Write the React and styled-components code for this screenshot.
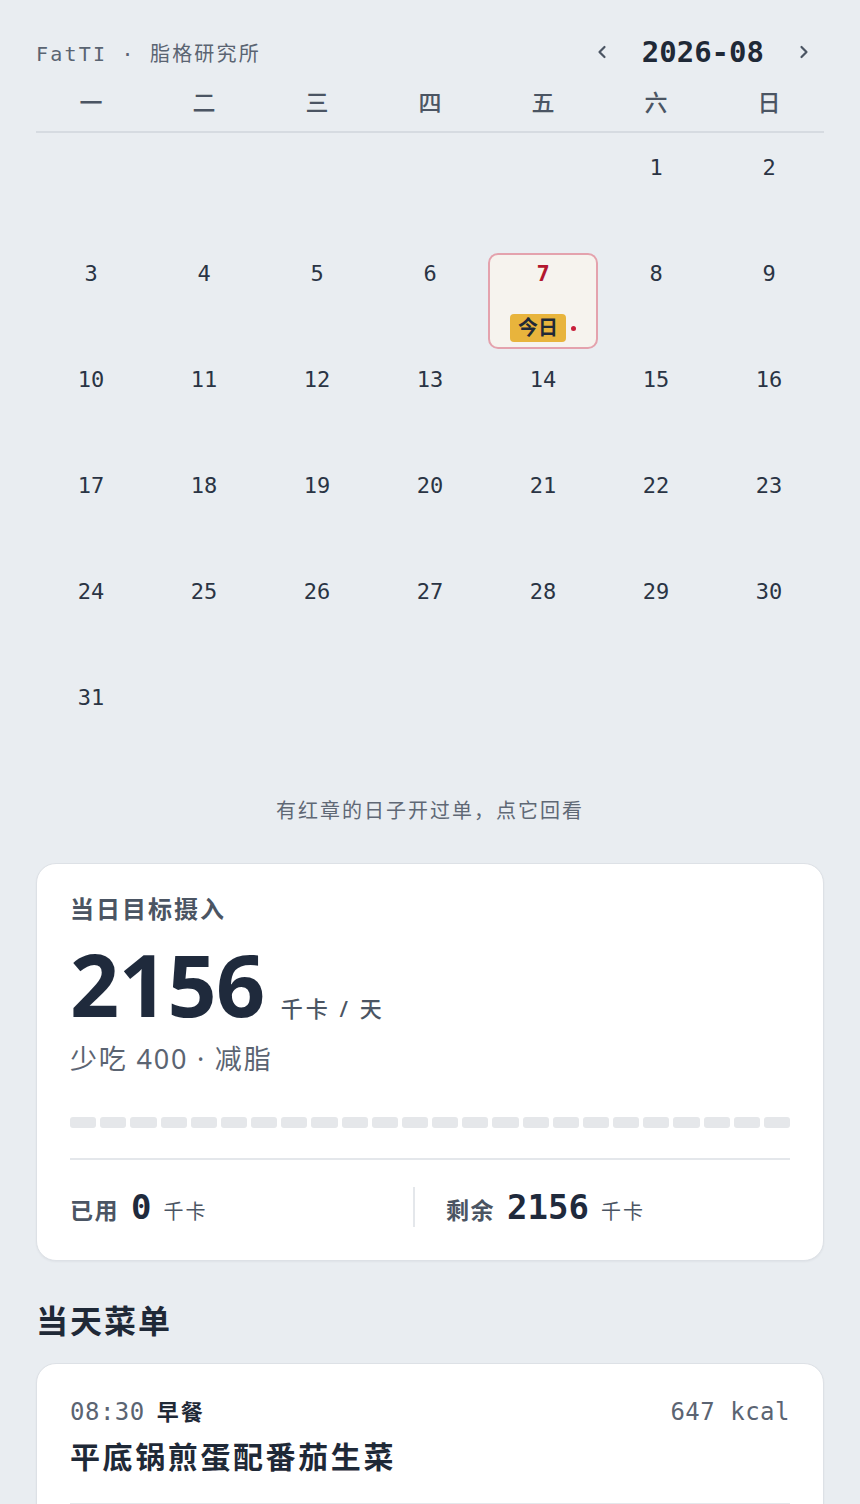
import React from 'react';
import styled, { createGlobalStyle } from 'styled-components';

const GlobalStyle = createGlobalStyle`
	html, body {
		margin: 0;
		padding: 0;
		background: #e9edf1;
	}
	body {
		font-family: 'Noto Sans', 'Noto Sans CJK SC', sans-serif;
		color: #1f2937;
	}
`;

const MONO = `'DejaVu Sans Mono', 'Noto Sans CJK SC', monospace`;
const SANS = `'Noto Sans', 'Noto Sans CJK SC', sans-serif`;

const Page = styled.div`
	padding: 36px 36px 0;
	min-height: 1504px;
	box-sizing: border-box;
`;

const Header = styled.header`
	display: flex;
	align-items: center;
	justify-content: space-between;
	height: 32px;
`;

const Brand = styled.div`
	font-family: ${MONO};
	font-size: 20px;
	letter-spacing: 2.2px;
	color: #5a6472;
`;

const MonthNav = styled.div`
	display: flex;
	align-items: center;
	gap: 33px;
	padding-right: 13px;
`;

const NavBtn = styled.button`
	border: none;
	background: none;
	padding: 0;
	display: flex;
	align-items: center;
	color: #4b5563;
	cursor: pointer;
`;

const MonthLabel = styled.div`
	font-family: ${MONO};
	font-weight: 700;
	font-size: 29px;
	color: #1f2937;
`;

const WeekRow = styled.div`
	display: grid;
	grid-template-columns: repeat(7, 1fr);
	column-gap: 3px;
	margin-top: 8px;
	padding: 14px 0 15px;
	border-bottom: 2px solid #d6dbe1;
`;

const WeekDay = styled.div`
	text-align: center;
	font-family: ${MONO};
	font-size: 23px;
	font-weight: 500;
	line-height: 26px;
	color: #4b5563;
`;

const Grid = styled.div`
	display: grid;
	grid-template-columns: repeat(7, 1fr);
	column-gap: 3px;
	row-gap: 10px;
	padding-top: 14px;
`;

const Cell = styled.div`
	height: 96px;
	box-sizing: border-box;
	border-radius: 10px;
	border: 2px solid ${(p) => (p.today ? '#e4a2ad' : 'transparent')};
	background: ${(p) => (p.today ? '#f6f3ee' : 'transparent')};
	display: flex;
	flex-direction: column;
	align-items: center;
	padding-top: 6px;
`;

const DayNum = styled.div`
	font-family: ${MONO};
	font-size: 22px;
	line-height: 26px;
	font-weight: ${(p) => (p.today ? 700 : 400)};
	color: ${(p) => (p.today ? '#b3172f' : '#2a3444')};
`;

const TodayRow = styled.div`
	display: flex;
	align-items: center;
	gap: 5px;
	margin-top: 27px;
`;

const TodayBadge = styled.span`
	background: #e8b43c;
	color: #1f2937;
	font-family: ${SANS};
	font-weight: 700;
	font-size: 20px;
	line-height: 28px;
	padding: 0 8px;
	border-radius: 4px;
`;

const Dot = styled.span`
	width: 5px;
	height: 5px;
	border-radius: 50%;
	background: #c81e3a;
`;

const Caption = styled.p`
	margin: 28px 0 0;
	text-align: center;
	font-size: 20px;
	letter-spacing: 2px;
	line-height: 20px;
	color: #5f6875;
`;

const Card = styled.section`
	background: #fff;
	border: 1px solid #dde1e6;
	border-radius: 20px;
	box-shadow: 0 1px 2px rgba(30, 40, 60, 0.05);
	margin-top: ${(p) => p.mt || 0}px;
	padding: ${(p) => p.pad || '30px 33px 0'};
`;

const CardLabel = styled.div`
	font-size: 24px;
	letter-spacing: 2px;
	line-height: 30px;
	font-weight: 700;
	color: #4b5563;
`;

const BigLine = styled.div`
	display: flex;
	align-items: baseline;
	gap: 16px;
	margin-top: 12px;
`;

const BigNum = styled.span`
	font-family: 'Noto Sans', sans-serif;
	font-weight: 700;
	font-size: 86px;
	line-height: 96px;
	color: #1f2a3c;
	letter-spacing: -0.5px;
`;

const BigUnit = styled.span`
	font-size: 22px;
	letter-spacing: 3px;
	color: #4b5563;
	font-weight: 500;
`;

const Sub = styled.div`
	font-size: 27px;
	letter-spacing: 1.8px;
	line-height: 34px;
	color: #5b6472;
	margin-top: 10px;
`;

const Segments = styled.div`
	display: flex;
	gap: 4px;
	margin-top: 41px;
`;

const Seg = styled.div`
	flex: 1;
	height: 11px;
	border-radius: 3px;
	background: #e5e7ea;
`;

const Divider = styled.div`
	height: 2px;
	background: #e4e7eb;
	margin-top: 30px;
`;

const Stats = styled.div`
	display: grid;
	grid-template-columns: 343px 1fr;
	padding: 27px 0 33px;
`;

const Stat = styled.div`
	display: flex;
	align-items: baseline;
	gap: 12px;
	border-left: ${(p) => (p.split ? '2px solid #e4e7eb' : 'none')};
	padding-left: ${(p) => (p.split ? '31px' : '0')};
	min-height: 40px;
	align-self: center;
`;

const StatLabel = styled.span`
	font-size: 23px;
	letter-spacing: 1.5px;
	font-weight: 700;
	color: #4b5563;
`;

const StatNum = styled.span`
	font-family: ${MONO};
	font-weight: 700;
	font-size: 34px;
	color: #1f2a3c;
`;

const StatUnit = styled.span`
	font-size: 20px;
	letter-spacing: 2px;
	color: #4b5563;
`;

const SectionTitle = styled.h2`
	margin: 38px 0 0;
	font-size: 32px;
	letter-spacing: 2px;
	line-height: 44px;
	font-weight: 700;
	color: #1f2937;
`;

const MealHead = styled.div`
	display: flex;
	justify-content: space-between;
	align-items: baseline;
`;

const MealTime = styled.span`
	font-family: ${MONO};
	font-size: 24px;
	letter-spacing: 0.5px;
	color: #5b6472;
`;

const MealKind = styled.span`
	font-size: 22px;
	letter-spacing: 2px;
	font-weight: 700;
	color: #1f2937;
	margin-left: 12px;
`;

const MealTitle = styled.div`
	font-size: 30px;
	letter-spacing: 2.6px;
	font-weight: 700;
	line-height: 40px;
	color: #1f2937;
	margin-top: 11px;
`;

const MealDivider = styled.div`
	height: 2px;
	background: #e4e7eb;
	margin-top: 26px;
`;

const Chevron = ({ dir }) => (
	<svg width="14" height="16" viewBox="0 0 14 16" fill="none">
		<path
			d={dir === 'left' ? 'M9.5 3 L4.5 8 L9.5 13' : 'M4.5 3 L9.5 8 L4.5 13'}
			stroke="currentColor"
			strokeWidth="2.2"
			strokeLinecap="round"
			strokeLinejoin="round"
		/>
	</svg>
);

const weekDays = ['一', '二', '三', '四', '五', '六', '日'];

export default function App() {
	// August 2026 starts on Saturday
	const cells = [];
	for (let i = 0; i < 5; i++) cells.push(null);
	for (let d = 1; d <= 31; d++) cells.push(d);

	return (
		<Page>
			<GlobalStyle />
			<Header>
				<Brand>FatTI · 脂格研究所</Brand>
				<MonthNav>
					<NavBtn><Chevron dir="left" /></NavBtn>
					<MonthLabel>2026-08</MonthLabel>
					<NavBtn><Chevron dir="right" /></NavBtn>
				</MonthNav>
			</Header>

			<WeekRow>
				{weekDays.map((w) => (
					<WeekDay key={w}>{w}</WeekDay>
				))}
			</WeekRow>

			<Grid>
				{cells.map((d, i) => {
					if (!d) return <Cell key={'e' + i} />;
					const today = d === 7;
					return (
						<Cell key={d} today={today}>
							<DayNum today={today}>{d}</DayNum>
							{today && (
								<TodayRow>
									<TodayBadge>今日</TodayBadge>
									<Dot />
								</TodayRow>
							)}
						</Cell>
					);
				})}
			</Grid>

			<Caption>有红章的日子开过单，点它回看</Caption>

			<Card mt={42}>
				<CardLabel>当日目标摄入</CardLabel>
				<BigLine>
					<BigNum>2156</BigNum>
					<BigUnit>千卡 / 天</BigUnit>
				</BigLine>
				<Sub>少吃 400 · 减脂</Sub>
				<Segments>
					{Array.from({ length: 24 }).map((_, i) => (
						<Seg key={i} />
					))}
				</Segments>
				<Divider />
				<Stats>
					<Stat>
						<StatLabel>已用</StatLabel>
						<StatNum>0</StatNum>
						<StatUnit>千卡</StatUnit>
					</Stat>
					<Stat split>
						<StatLabel>剩余</StatLabel>
						<StatNum>2156</StatNum>
						<StatUnit>千卡</StatUnit>
					</Stat>
				</Stats>
			</Card>

			<SectionTitle>当天菜单</SectionTitle>

			<Card mt={20} pad="30px 33px 40px">
				<MealHead>
					<div>
						<MealTime>08:30</MealTime>
						<MealKind>早餐</MealKind>
					</div>
					<MealTime>647 kcal</MealTime>
				</MealHead>
				<MealTitle>平底锅煎蛋配番茄生菜</MealTitle>
				<MealDivider />
			</Card>
		</Page>
	);
}
